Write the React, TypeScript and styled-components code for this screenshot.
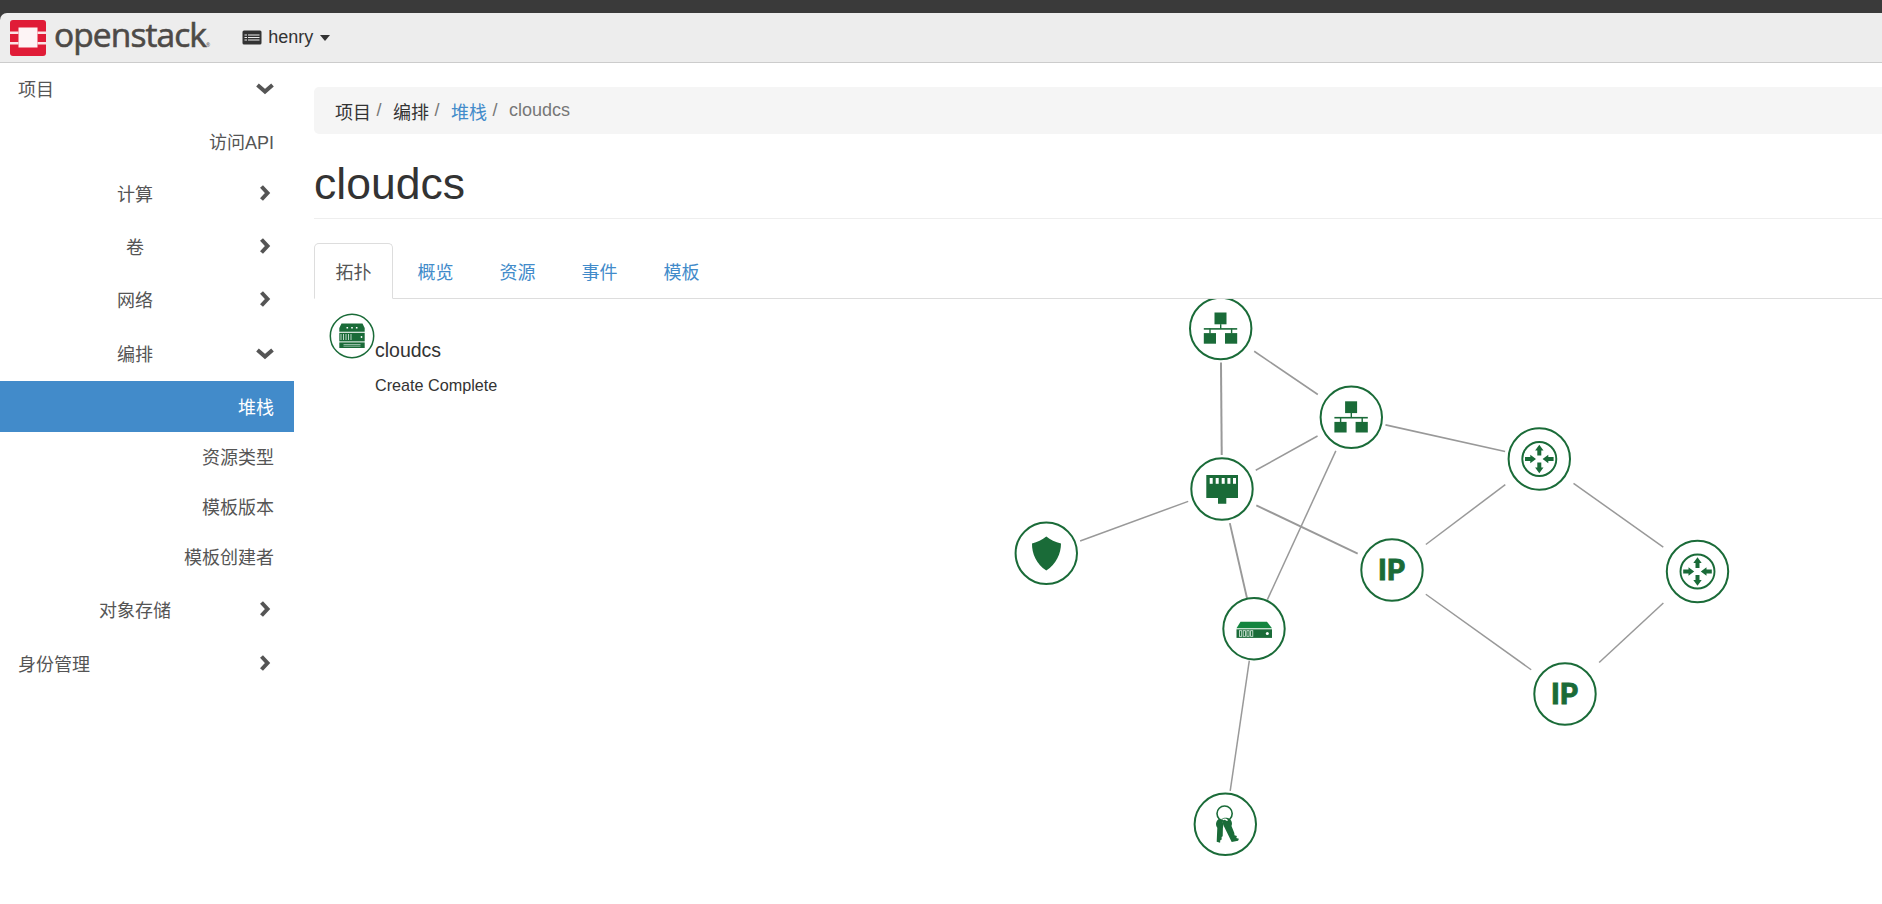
import React from 'react';
import styled, { createGlobalStyle } from 'styled-components';

const GREEN = '#1a6b38';
const BLUE = '#428bca';
const SANS = '"Liberation Sans", "Noto Sans CJK SC", sans-serif';

const GlobalStyle = createGlobalStyle`
  html, body {
    margin: 0;
    padding: 0;
    height: 100%;
    overflow: hidden;
    background: #fff;
    font-family: ${SANS};
  }
`;

const TopStrip = styled.div`
  height: 13px;
  background: #3a3a3a;
`;

const StripBackdrop = styled.div`
  background: #3a3a3a;
`;

const Header = styled.header`
  height: 49px;
  background: #ededed;
  border-bottom: 1px solid #ccc;
  border-top-left-radius: 7px;
  display: flex;
  align-items: center;
  padding-left: 10px;
`;

const LogoText = styled.span`
  font-family: "Open Sans", sans-serif;
  font-size: 33.5px;
  letter-spacing: -0.9px;
  -webkit-text-stroke: 0.6px #4d4a47;
  color: #4d4a47;
  margin-left: 8px;
  line-height: 36px;
  position: relative;
  top: 2px;
`;

const LogoMark = styled.sup`
  font-size: 5px;
  letter-spacing: 0;
  -webkit-text-stroke: 0;
  vertical-align: baseline;
  color: #4d4a47;
`;

const ProjectPicker = styled.div`
  display: flex;
  align-items: center;
  margin-left: 32px;
  font-size: 18px;
  color: #333;
`;

const ProjectName = styled.span`
  margin-left: 6px;
`;

const Caret = styled.span`
  width: 0;
  height: 0;
  margin-left: 7px;
  border-top: 6px solid #333;
  border-left: 5.5px solid transparent;
  border-right: 5.5px solid transparent;
`;

const Body = styled.div`
  display: flex;
`;

const Sidebar = styled.nav`
  width: 294px;
  flex: none;
`;

const NavRow = styled.div<{ $h: number; $active?: boolean }>`
  height: ${(p) => p.$h}px;
  box-sizing: border-box;
  display: flex;
  align-items: center;
  padding: 0 20px 2px 18px;
  font-size: 18px;
  color: ${(p) => (p.$active ? '#fff' : '#555')};
  background: ${(p) => (p.$active ? BLUE : 'transparent')};
`;

const NavLabel = styled.span<{ $align: string }>`
  flex: 1;
  text-align: ${(p) => p.$align};
  padding-right: ${(p) => (p.$align === 'center' ? 3 : 0)}px;
`;

const NavChevron = styled.svg`
  width: 20px;
  height: 20px;
  flex: none;
  margin-right: -1px;
  fill: none;
  stroke: #555;
  stroke-width: 4;
`;

const Main = styled.main`
  flex: 1;
  min-width: 0;
  margin-left: 20px;
  padding-top: 24px;
`;

const Breadcrumb = styled.div`
  height: 47px;
  background: #f5f5f5;
  border-radius: 5px 0 0 5px;
  display: flex;
  align-items: center;
  padding-left: 21px;
  font-size: 18px;
`;

const Crumb = styled.span<{ $tone: 'dark' | 'link' | 'muted' }>`
  color: ${(p) => (p.$tone === 'link' ? BLUE : p.$tone === 'muted' ? '#777' : '#333')};
`;

const CrumbSep = styled.span`
  color: #777;
  margin: 0 11.5px 0 5.5px;
`;

const PageHeader = styled.div`
  height: 84px;
  border-bottom: 1px solid #eee;
  display: flex;
  align-items: flex-end;
`;

const Title = styled.h1`
  margin: 0 0 10px;
  font-size: 44.5px;
  font-weight: 400;
  line-height: 48px;
  color: #333;
`;

const Tabs = styled.div`
  margin-top: 24px;
  height: 55px;
  display: flex;
  border-bottom: 1px solid #ddd;
`;

const Tab = styled.div<{ $active?: boolean }>`
  width: 79px;
  height: 56px;
  box-sizing: border-box;
  margin-right: 3px;
  display: flex;
  align-items: center;
  justify-content: center;
  font-size: 18px;
  color: ${(p) => (p.$active ? '#555' : BLUE)};
  background: ${(p) => (p.$active ? '#fff' : 'transparent')};
  border: 1px solid ${(p) => (p.$active ? '#ddd' : 'transparent')};
  border-bottom-color: ${(p) => (p.$active ? '#fff' : 'transparent')};
  border-radius: 5px 5px 0 0;
`;

const TopologyPanel = styled.section`
  position: relative;
  height: 605px;
`;

const TopologySvg = styled.svg`
  display: block;
  width: 1568px;
  height: 605px;
`;

const StackInfo = styled.div`
  position: absolute;
  left: 15px;
  top: 14px;
  display: flex;
  align-items: flex-start;
  color: #333;
`;

const StackBadge = styled.svg`
  width: 46px;
  height: 46px;
  flex: none;
`;

const StackText = styled.div`
  padding-top: 25px;
`;

const StackName = styled.div`
  font-size: 19.5px;
  line-height: 24px;
`;

const StackStatus = styled.div`
  margin-top: 13px;
  font-size: 16.2px;
  line-height: 20px;
`;

const IpLabel = styled.text`
  font-family: Lato, "Liberation Sans", sans-serif;
  font-weight: 900;
  font-size: 29px;
  fill: ${GREEN};
  stroke: ${GREEN};
  stroke-width: 0.9;
`;

const Logo = () => (
  <svg width="36" height="36" viewBox="0 0 36 36">
    <rect width="36" height="36" rx="3" fill="#e01c37" />
    <rect x="8.5" y="7.5" width="19" height="20" fill="#fdf4f5" />
    <path d="M0 11.5h8.5v2.5H0zM27.5 11.5H36v2.5h-8.5zM0 22h8.5v2.5H0zM27.5 22H36v2.5h-8.5z" fill="#fbe3e6" />
  </svg>
);

const ProjectIcon = () => (
  <svg width="20" height="15" viewBox="0 0 20 15">
    <rect x="0.5" y="0.5" width="19" height="14" rx="1.5" fill="#333" />
    <path d="M2.5 4.5h2.5v1H2.5zM6 4.5h11.5v1H6zM2.5 7h2.5v1H2.5zM6 7h11.5v1H6zM2.5 9.5h2.5v1H2.5zM6 9.5h11.5v1H6z" fill="#ededed" />
  </svg>
);

const Chevron = ({ dir }: { dir?: 'right' | 'down' }) => (
  <NavChevron viewBox="0 0 20 20">
    {dir === 'right' && <path d="M6.5 3.5L12.5 10L6.5 16.5" />}
    {dir === 'down' && <path d="M2.5 7L10 13.5L17.5 7" />}
  </NavChevron>
);

type NavItem = {
  label: string;
  h: number;
  align: string;
  dir?: 'right' | 'down';
  active?: boolean;
};

const navItems: NavItem[] = [
  { label: '项目', h: 52, align: 'left', dir: 'down' },
  { label: '访问API', h: 53, align: 'right' },
  { label: '计算', h: 52, align: 'center', dir: 'right' },
  { label: '卷', h: 53, align: 'center', dir: 'right' },
  { label: '网络', h: 54, align: 'center', dir: 'right' },
  { label: '编排', h: 54, align: 'center', dir: 'down' },
  { label: '堆栈', h: 51, align: 'right', active: true },
  { label: '资源类型', h: 50, align: 'right' },
  { label: '模板版本', h: 50, align: 'right' },
  { label: '模板创建者', h: 50, align: 'right' },
  { label: '对象存储', h: 56, align: 'center', dir: 'right' },
  { label: '身份管理', h: 52, align: 'left', dir: 'right' },
];

const NetworkGlyph = () => (
  <g fill={GREEN}>
    <rect x="-6.2" y="-16" width="12" height="11.8" />
    <rect x="-16.9" y="-0.4" width="33.4" height="1.6" />
    <rect x="-0.7" y="-4.3" width="1.4" height="4.5" />
    <rect x="-11.4" y="0" width="1.4" height="5" />
    <rect x="10.2" y="0" width="1.4" height="5" />
    <rect x="-16.9" y="4.6" width="12.2" height="10.6" />
    <rect x="4.3" y="4.6" width="12.2" height="10.6" />
  </g>
);

const PortGlyph = () => (
  <g>
    <path d="M-15.7 -14H16V9H4.3V14.7H-4V9H-15.7Z" fill={GREEN} />
    {[-12.3, -6.3, -0.3, 5.4, 11].map((x) => (
      <rect key={x} x={x} y="-11" width="3" height="5.8" fill="#fff" />
    ))}
  </g>
);

const ShieldGlyph = () => (
  <path d="M0 -16.7C4 -13.5 9 -11 14.7 -9.8C14.7 0 10 11 0 17.3C-10 11 -14.5 0 -14.3 -9.8C-9 -11 -4 -13.5 0 -16.7Z" fill={GREEN} />
);

const RouterGlyph = () => (
  <g>
    <circle r="17" fill="none" stroke={GREEN} strokeWidth="1.9" />
    <g fill={GREEN}>
      <path d="M0 -14.3L4.2 -8.5H2V-3.5H-2V-8.5H-4.2Z" />
      <path d="M0 14.3L4.2 8.5H2V3.5H-2V8.5H-4.2Z" />
      <path d="M-3.3 0L-9 -4.2V-2H-14.3V2H-9V4.2Z" />
      <path d="M3.3 0L9 -4.2V-2H14.3V2H9V4.2Z" />
    </g>
  </g>
);

const IpGlyph = () => (
  <IpLabel x="-0.5" y="10.4" textAnchor="middle">IP</IpLabel>
);

const ServerGlyph = () => (
  <g>
    <path d="M-13.5 -7H13L18 -0.4H-17.5Z" fill="#14853f" />
    <rect x="-17.5" y="0.6" width="35.5" height="8.6" fill={GREEN} />
    {[-14.5, -10.8, -7.1, -3.4].map((x) => (
      <rect key={x} x={x} y="2" width="2.2" height="5.6" fill={GREEN} stroke="#dfeee4" strokeWidth="0.8" />
    ))}
    <circle cx="13.3" cy="4.8" r="1.5" fill="#fff" />
  </g>
);

const KeyGlyph = () => (
  <g>
    <circle cx="-0.7" cy="-10.7" r="7.6" fill="none" stroke={GREEN} strokeWidth="1.6" />
    <path
      d="M-7 -5C-9.8 -2.5 -9.8 1 -8 3.5L-8.6 17.5L-5.2 18.4L-5 16L-3.6 15.2L-3.7 12.8L-2.6 12L-2.4 4C-1.4 1 -2.5 -2.5 -4 -5.5Z"
      fill={GREEN}
    />
    <path
      d="M-3.4 -5.4C-3.2 -2 -2.2 0.5 -1 2.6L6.4 17.6L12.8 16.4L13.6 14.4L11 13.8L11.6 11.8L9.2 11L9 8.6L6.2 1.8C7.6 -1.4 6 -5 2.6 -6.2C0.6 -7 -1.8 -6.8 -3.4 -5.4Z"
      fill={GREEN}
    />
    <path d="M-2.6 -4.4C-1.4 -5.6 1.2 -5.2 2.2 -3.6" fill="none" stroke="#fff" strokeWidth="1.3" />
  </g>
);

type NodeKind = 'network' | 'port' | 'shield' | 'router' | 'ip' | 'server' | 'key';

const glyphs: Record<NodeKind, React.FC> = {
  network: NetworkGlyph,
  port: PortGlyph,
  shield: ShieldGlyph,
  router: RouterGlyph,
  ip: IpGlyph,
  server: ServerGlyph,
  key: KeyGlyph,
};

// page coordinates of each resource on the d3 canvas
const nodes: Record<string, { x: number; y: number; kind: NodeKind }> = {
  net1: { x: 1220.7, y: 328.5, kind: 'network' },
  net2: { x: 1351.3, y: 417.3, kind: 'network' },
  port: { x: 1222, y: 489, kind: 'port' },
  shield: { x: 1046.3, y: 553.3, kind: 'shield' },
  router1: { x: 1539.3, y: 459, kind: 'router' },
  router2: { x: 1697.5, y: 571.5, kind: 'router' },
  ip1: { x: 1392, y: 570, kind: 'ip' },
  ip2: { x: 1565, y: 694, kind: 'ip' },
  server: { x: 1254, y: 628.7, kind: 'server' },
  key: { x: 1225.3, y: 824.3, kind: 'key' },
};

// from, to, gap at each end, stroke width
const links: [string, string, number, number, number][] = [
  ['net1', 'port', 34, 34, 2],
  ['net1', 'net2', 40.5, 40.5, 1.6],
  ['net2', 'port', 38.6, 38.6, 1.5],
  ['net2', 'router1', 35, 35, 1.6],
  ['net2', 'server', 37, 32, 1.5],
  ['port', 'shield', 36, 36, 1.5],
  ['port', 'ip1', 38, 38, 1.9],
  ['port', 'server', 35, 31.5, 1.9],
  ['router1', 'ip1', 42.6, 42.4, 1.5],
  ['router1', 'router2', 42, 42, 1.5],
  ['ip1', 'ip2', 41.6, 41.6, 1.5],
  ['ip2', 'router2', 46.5, 46.5, 1.5],
  ['server', 'key', 32.3, 33.7, 1.5],
];

const Link = ({ link }: { link: [string, string, number, number, number] }) => {
  const [from, to, gapA, gapB, width] = link;
  const a = nodes[from];
  const b = nodes[to];
  const len = Math.hypot(b.x - a.x, b.y - a.y);
  const ux = (b.x - a.x) / len;
  const uy = (b.y - a.y) / len;
  return (
    <line
      x1={a.x + ux * gapA}
      y1={a.y + uy * gapA}
      x2={b.x - ux * gapB}
      y2={b.y - uy * gapB}
      stroke="#999"
      strokeWidth={width}
    />
  );
};

const Topology = () => (
  <TopologySvg viewBox="314 299 1568 605">
    {links.map((l) => (
      <Link key={l[0] + l[1]} link={l} />
    ))}
    {Object.entries(nodes).map(([id, n]) => {
      const Glyph = glyphs[n.kind];
      return (
        <g key={id} transform={`translate(${n.x} ${n.y})`}>
          <circle r="30.7" fill="#fff" stroke={GREEN} strokeWidth="2" />
          <Glyph />
        </g>
      );
    })}
  </TopologySvg>
);

const StackIcon = () => (
  <StackBadge viewBox="-23 -23 46 46">
    <circle r="21.7" fill="#fff" stroke={GREEN} strokeWidth="1.5" />
    <path d="M-10.5 -12.5H10.5L12.7 -8V-4.2H-12.7V-8Z" fill={GREEN} />
    <rect x="-12.7" y="-3.2" width="25.4" height="8.6" fill={GREEN} />
    <rect x="-12.7" y="6.4" width="25.4" height="5.6" fill={GREEN} />
    <path d="M-5.5 -9h1.6v1.6h-1.6zM-0.8 -9h1.6v1.6h-1.6zM3.9 -9h1.6v1.6h-1.6z" fill="#fff" />
    <path d="M-11.5 -2h1v6h-1zM-9 -2h1v6h-1zM-6.5 -2h1v6h-1zM-4 -2h1v6h-1zM-1.5 -2h1v6h-1z" fill="#bcd6c6" />
    <circle cx="9.5" cy="1" r="0.9" fill="#fff" />
    <path d="M-8.5 8h17v0.8h-17zM-8.5 9.8h17v0.8h-17z" fill="#bcd6c6" />
  </StackBadge>
);

const App = () => (
  <>
    <GlobalStyle />
    <TopStrip />
    <StripBackdrop>
      <Header>
        <Logo />
        <LogoText>
          openstack<LogoMark>®</LogoMark>
        </LogoText>
        <ProjectPicker>
          <ProjectIcon />
          <ProjectName>henry</ProjectName>
          <Caret />
        </ProjectPicker>
      </Header>
    </StripBackdrop>
    <Body>
      <Sidebar>
        {navItems.map((item) => (
          <NavRow key={item.label} $h={item.h} $active={item.active}>
            <NavLabel $align={item.align}>{item.label}</NavLabel>
            {item.dir && <Chevron dir={item.dir} />}
          </NavRow>
        ))}
      </Sidebar>
      <Main>
        <Breadcrumb>
          <Crumb $tone="dark">项目</Crumb>
          <CrumbSep>/</CrumbSep>
          <Crumb $tone="dark">编排</Crumb>
          <CrumbSep>/</CrumbSep>
          <Crumb $tone="link">堆栈</Crumb>
          <CrumbSep>/</CrumbSep>
          <Crumb $tone="muted">cloudcs</Crumb>
        </Breadcrumb>
        <PageHeader>
          <Title>cloudcs</Title>
        </PageHeader>
        <Tabs>
          <Tab $active>拓扑</Tab>
          <Tab>概览</Tab>
          <Tab>资源</Tab>
          <Tab>事件</Tab>
          <Tab>模板</Tab>
        </Tabs>
        <TopologyPanel>
          <Topology />
          <StackInfo>
            <StackIcon />
            <StackText>
              <StackName>cloudcs</StackName>
              <StackStatus>Create Complete</StackStatus>
            </StackText>
          </StackInfo>
        </TopologyPanel>
      </Main>
    </Body>
  </>
);

export default App;
